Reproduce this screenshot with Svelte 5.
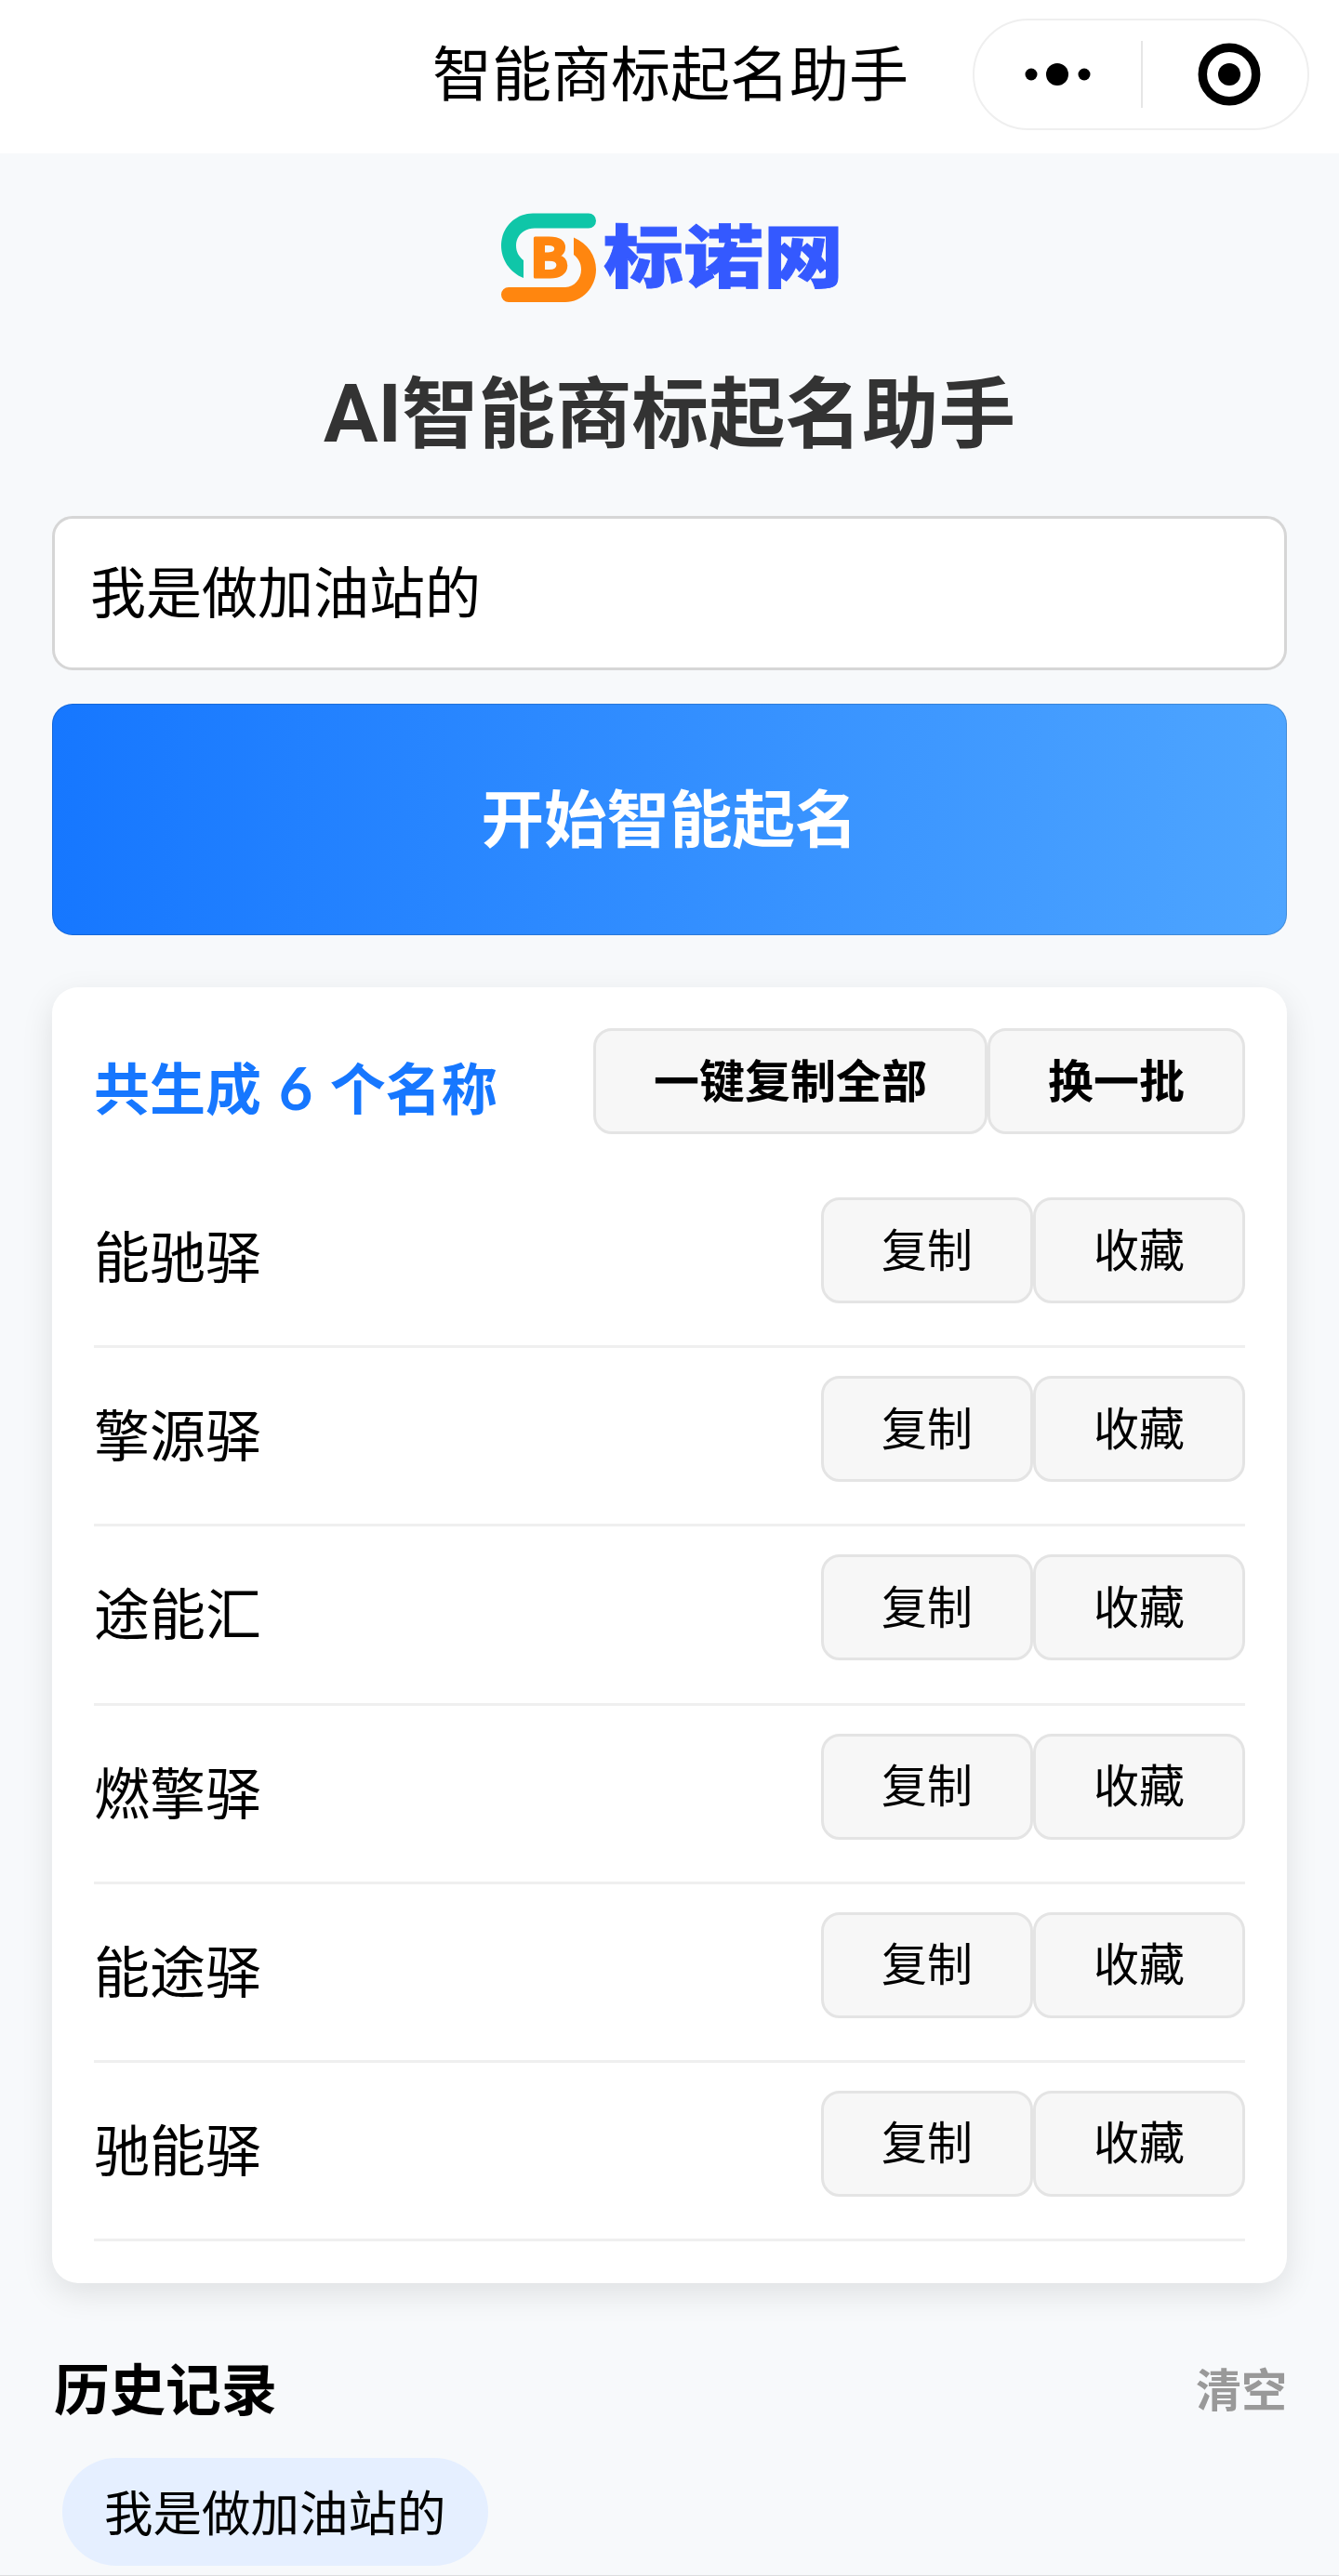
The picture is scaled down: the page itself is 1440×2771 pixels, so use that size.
<script lang="ts">
    let keyword = $state("我是做加油站的");
    let names = $state(["能驰驿", "擎源驿", "途能汇", "燃擎驿", "能途驿", "驰能驿"]);
    let history = $state(["我是做加油站的"]);
</script>

<div class="page">
    <header class="navbar">
        <span class="nav-title">智能商标起名助手</span>
        <div class="capsule">
            <svg class="more" viewBox="0 0 72 24" width="72" height="24">
                <circle cx="8" cy="12" r="6.5" />
                <circle cx="36" cy="12" r="12" />
                <circle cx="65" cy="12" r="6.5" />
            </svg>
            <span class="split"></span>
            <svg class="close" viewBox="0 0 68 68" width="68" height="68">
                <circle class="ring" cx="34" cy="34" r="28.7" />
                <circle cx="34" cy="34" r="12" />
            </svg>
        </div>
    </header>

    <main>
        <svg class="logo" viewBox="0 0 400 130" width="400" height="130">
            <path
                fill="#0fc6a8"
                d="M53 19.5H113a8 8 0 0 1 0 16H55C43 35.500 35 44 35 54C35 61 38 66 43 70V89C28 83 19 69 19 54C19 35 34 19.500 53 19.500Z"
            />
            <path
                fill="#ff860f"
                d="M97 45.500C112 52 121 65 121 80C121 99 106 115 88 115H27a8 8 0 0 1 0-16H88C98 98.500 105 90 105 80C105 73 102 68 97 64Z"
            />
            <text class="logo-b" transform="translate(50 88) scale(1.06 1)">B</text>
            <text class="logo-name" transform="translate(129 92.500) scale(1 .85)">标诺网</text>
        </svg>

        <h1><span>AI</span>智能商标起名助手</h1>

        <input bind:value={keyword} />
        <button class="start">开始智能起名</button>

        <section class="card">
            <div class="card-head">
                <h2>共生成 <span>{names.length}</span> 个名称</h2>
                <div class="btns bold">
                    <button>一键复制全部</button>
                    <button>换一批</button>
                </div>
            </div>
            {#each names as name}
                <div class="row">
                    <span class="name">{name}</span>
                    <div class="btns">
                        <button>复制</button>
                        <button>收藏</button>
                    </div>
                </div>
            {/each}
        </section>

        <div class="history-head">
            <h3>历史记录</h3>
            <span class="clear">清空</span>
        </div>
        <div class="tags">
            {#each history as item}
                <span class="tag">{item}</span>
            {/each}
        </div>
    </main>
</div>

<style>
    :global(body) {
        margin: 0;
        background: #f7f9fb;
    }

    .page {
        box-sizing: border-box;
        width: 1440px;
        height: 2771px;
        overflow: hidden;
        border-bottom: 1px solid #dcdddf;
        background: #f7f9fb;
        color: #000;
        font-family: "Noto Sans CJK SC", sans-serif;
    }

    .navbar {
        display: flex;
        align-items: center;
        justify-content: flex-end;
        box-sizing: border-box;
        height: 165px;
        padding: 0 32px 5px 0;
        background: #fff;
    }

    .nav-title {
        margin-right: 69px;
        padding-bottom: 10px;
        font-size: 64px;
        line-height: 80px;
    }

    .capsule {
        display: flex;
        align-items: center;
        box-sizing: border-box;
        width: 362px;
        height: 120px;
        padding-left: 53px;
        border: 2px solid #efefef;
        border-radius: 60px;
    }

    .split {
        width: 2px;
        height: 72px;
        margin: 0 59px 0 54px;
        background: #e6e6e6;
    }

    .ring {
        fill: none;
        stroke: #000;
        stroke-width: 9.5;
    }

    main {
        display: flex;
        flex-direction: column;
        padding: 45px 56px 0;
    }

    .logo {
        align-self: center;
    }

    .logo-b {
        fill: #ff860f;
        stroke: #ff860f;
        stroke-width: 3;
        stroke-linejoin: round;
        font: 700 57px "Noto Sans CJK SC", sans-serif;
    }

    .logo-name {
        fill: #3459ff;
        stroke: #3459ff;
        stroke-width: 1;
        font: 900 86px "Noto Sans CJK SC", sans-serif;
    }

    h1,
    h2,
    h3 {
        margin: 0;
        font-weight: 700;
    }

    h1 {
        height: 120px;
        margin-top: 39px;
        color: #333;
        font-size: 82.5px;
        line-height: 120px;
        text-align: center;
    }

    /* plain sans latin, no serifs on the I */
    h1 span {
        font-family: Roboto, sans-serif;
        font-size: 87px;
        line-height: 1;
    }

    input {
        box-sizing: border-box;
        width: 100%;
        height: 166px;
        margin: 56px 0 36px;
        padding: 0 38px 9px;
        border: 3px solid #d6d6d6;
        border-radius: 22px;
        background: #fff;
        color: #000;
        font: 60px "Noto Sans CJK SC", sans-serif;
        outline: none;
    }

    button {
        font-family: inherit;
    }

    .start {
        height: 249px;
        padding: 0 0 10px;
        border: 1px solid rgba(0, 0, 0, 0.15);
        border-radius: 22px;
        background: linear-gradient(90deg, #1677ff, #4ea5ff) border-box;
        color: #fff;
        font-size: 67.5px;
        font-weight: 700;
    }

    .card {
        box-sizing: border-box;
        height: 1394px;
        margin-top: 56px;
        padding: 44px 45px 0;
        border-radius: 28px;
        background: #fff;
        box-shadow: 0 11px 34px rgba(0, 0, 0, 0.1);
    }

    .card-head {
        display: flex;
        justify-content: space-between;
        height: 114px;
        margin-bottom: 38px;
    }

    h2 {
        padding-top: 5px;
        color: #1677ff;
        font-size: 60px;
        line-height: 114px;
        word-spacing: 5px;
    }

    h2 span {
        font-family: Lato, sans-serif;
        font-size: 63px;
        line-height: 1;
    }

    .btns {
        display: flex;
    }

    .btns button {
        box-sizing: border-box;
        height: 114px;
        padding: 0 62px 7px;
        border: 3px solid #e4e4e4;
        border-radius: 20px;
        background: #f7f7f7;
        color: #000;
        font-size: 49px;
        line-height: 60px;
    }

    .bold button {
        font-weight: 700;
    }

    .row {
        display: flex;
        justify-content: space-between;
        box-sizing: border-box;
        height: 192.2px;
        padding-top: 30px;
        border-bottom: 3px solid #efefef;
    }

    .name {
        padding-top: 4px;
        font-size: 60px;
        line-height: 114px;
    }

    .history-head {
        display: flex;
        align-items: center;
        justify-content: space-between;
        height: 80px;
        margin-top: 71px;
        padding: 0 0 0 2px;
    }

    h3 {
        font-size: 60px;
        line-height: 80px;
    }

    .clear {
        padding-top: 2px;
        color: #999;
        font-size: 49px;
        font-weight: 700;
        line-height: 80px;
    }

    .tags {
        display: flex;
        padding: 37px 11px 0;
    }

    .tag {
        height: 116px;
        padding: 0 45px;
        border-radius: 58px;
        background: #e5efff;
        font-size: 52.5px;
        line-height: 112px;
    }
</style>
